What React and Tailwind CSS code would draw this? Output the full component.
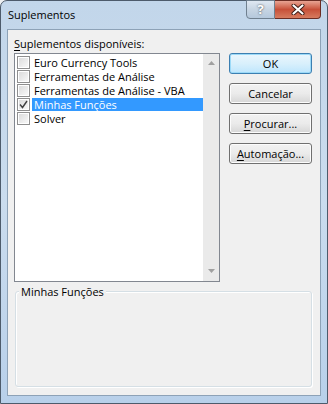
import React from 'react';

const items = [
  { label: 'Euro Currency Tools', checked: false },
  { label: 'Ferramentas de Análise', checked: false },
  { label: 'Ferramentas de Análise - VBA', checked: false },
  { label: 'Minhas Funções', checked: true, selected: true },
  { label: 'Solver', checked: false },
];

function CheckBox({ checked }) {
  return (
    <div className="w-[13px] h-[13px] border border-[#8f8f8f] bg-white p-px shrink-0">
      <div className="w-full h-full bg-gradient-to-br from-[#dcdcdc] to-[#f8f8f8] flex items-center justify-center">
        {checked && (
          <svg width="9" height="9" viewBox="0 0 9 9">
            <path d="M1 4.5 L3.5 7.5 L8 1" fill="none" stroke="#404040" strokeWidth="1.4" />
          </svg>
        )}
      </div>
    </div>
  );
}

function Button({ children, isDefault }) {
  return (
    <button
      className={`w-[83px] h-[21px] rounded-[3px] border text-[11px] text-black leading-none flex items-center justify-center ${
        isDefault
          ? 'border-[#3c7fb1] bg-gradient-to-b from-[#eaf6fd] via-[#d9f0fc] to-[#bee6fd] shadow-[inset_0_0_0_1px_#9cdaf8]'
          : 'border-[#707070] bg-gradient-to-b from-[#f2f2f2] via-[#ebebeb] to-[#d6d6d6] shadow-[inset_0_0_0_1px_#fcfcfc]'
      }`}
    >
      {children}
    </button>
  );
}

function App() {
  return (
    <div className="w-[328px] h-[404px] bg-[#eef0f2] font-['Open_Sans','Noto_Sans',sans-serif]">
      <div className="w-full h-full rounded-t-[7px] border border-[#4d5b6b] bg-gradient-to-b from-[#c2d6ea] via-[#cadcee] to-[#b8d0ea] flex flex-col">
        {/* Title bar */}
        <div className="h-[28px] flex items-start justify-between">
          <div className="pl-[7px] pt-[6px] text-[11px] leading-[16px] text-black">Suplementos</div>
          <div className="flex mr-[6px] -mt-px">
            <div className="w-[29px] h-[19px] rounded-bl-[4px] border border-[#70808f] bg-gradient-to-b from-[#dfe8f2] via-[#c7d5e3] to-[#b5c8dc] flex items-center justify-center text-white text-[13px] font-bold [text-shadow:0_0_2px_#333]">
              ?
            </div>
            <div className="w-[46px] h-[19px] rounded-br-[4px] border border-l-0 border-[#6b2d24] bg-gradient-to-b from-[#e8a493] via-[#c75039] to-[#d67b5f] flex items-center justify-center">
              <svg width="14" height="11" viewBox="0 0 14 11">
                <path d="M2.5 1.5 L11.5 9.5 M11.5 1.5 L2.5 9.5" stroke="#3a1a14" strokeWidth="4" strokeLinecap="round" />
                <path d="M2.5 1.5 L11.5 9.5 M11.5 1.5 L2.5 9.5" stroke="#ffffff" strokeWidth="2.2" strokeLinecap="round" />
              </svg>
            </div>
          </div>
        </div>

        {/* Client area */}
        <div className="flex-1 mx-[6px] mb-[7px] border border-[#8da2b7] bg-[#f0f0f0] flex flex-col pl-[6px] pr-[8px]">
          <div className="text-[11px] text-black mt-[6px] h-[17px] leading-[16px]">
            <span className="underline underline-offset-2">S</span>uplementos disponíveis:
          </div>
          <div className="flex">
            <div className="w-[206px] h-[229px] border border-[#828790] bg-white flex">
              <div className="flex-1 pt-px">
                {items.map((item) => (
                  <div key={item.label} className="h-[14px] flex items-center pl-[2px]">
                    <CheckBox checked={item.checked} />
                    <div
                      className={`flex-1 h-[13px] ml-[2px] pl-[2px] text-[11px] leading-[13px] whitespace-nowrap ${
                        item.selected ? 'bg-[#3399ff] text-white' : 'text-black'
                      }`}
                    >
                      {item.label}
                    </div>
                  </div>
                ))}
              </div>
              <div className="w-[16px] bg-[#eaeaea] flex flex-col justify-between items-center pt-[7px] pb-[8px]">
                <svg width="7" height="4" viewBox="0 0 7 4"><path d="M0 4 L3.5 0 L7 4 Z" fill="#a0a0a0" /></svg>
                <svg width="7" height="4" viewBox="0 0 7 4"><path d="M0 0 L7 0 L3.5 4 Z" fill="#a0a0a0" /></svg>
              </div>
            </div>
            <div className="ml-auto flex flex-col gap-[9px]">
              <Button isDefault>OK</Button>
              <Button>Cancelar</Button>
              <Button>
                <span className="underline underline-offset-2">P</span>rocurar...
              </Button>
              <Button>
                <span className="underline underline-offset-2">A</span>utomação...
              </Button>
            </div>
          </div>

          {/* Description group */}
          <div className="relative mt-[9px] ml-px h-[96px] rounded-[3px] border border-[#d5dfe5] shadow-[inset_1px_1px_0_#ffffff,1px_1px_0_#ffffff]">
            <div className="absolute -top-[7px] left-[3px] px-[2px] bg-[#f0f0f0] text-[11px] leading-[14px] text-black">
              Minhas Funções
            </div>
          </div>
        </div>
      </div>
    </div>
  );
}

export default App;
